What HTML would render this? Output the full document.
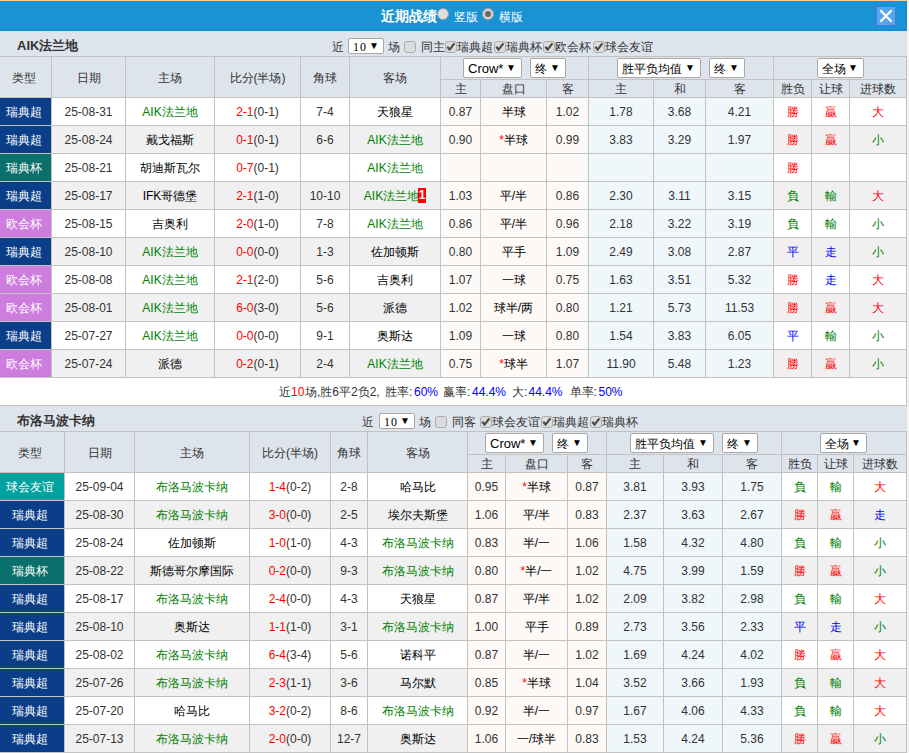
<!DOCTYPE html><html><head><meta charset="utf-8"><style>
*{margin:0;padding:0;box-sizing:content-box}
html,body{width:909px;height:753px;overflow:hidden;background:#f2f2f2}
body{position:relative;font-family:"Liberation Sans",sans-serif;font-size:12px;font-weight:500}
.c{position:absolute;text-align:center;white-space:nowrap;overflow:visible}
.t{position:absolute;white-space:nowrap;line-height:16px}
.sel{position:absolute;background:#fff;border:1px solid #a8a8a8;border-radius:2px;color:#000;font-size:12px;white-space:nowrap}
.sel .st{position:absolute;left:4px;top:1px}
.sel .ar{position:absolute;right:5px;top:0;font-size:10px}
.cb{position:absolute;width:10px;height:10px;border:1px solid #adadad;border-radius:3px;background:#dcdcdc}
.cb svg{position:absolute;left:-1px;top:-1px}
.card{display:inline-block;background:#f00;color:#fff;font-weight:bold;width:8px;height:15px;line-height:15px;text-align:center;vertical-align:middle;font-size:12px;position:relative;top:-1px;margin-left:-1px}
.radio{position:absolute;width:10px;height:10px;border-radius:50%;border:1px solid #a0a0a0;background:#dedede}
</style></head><body>
<div style="position:absolute;left:0px;top:0px;width:907px;height:1px;background:#f5cf94"></div>
<div style="position:absolute;left:0px;top:1px;width:907px;height:30px;background:#1a93d5"></div>
<div style="position:absolute;left:0px;top:30px;width:907px;height:1px;background:#0d8bd2"></div>
<div style="position:absolute;left:906px;top:1px;width:1px;height:30px;background:#0d8bd2"></div>
<div style="position:absolute;left:907px;top:0px;width:2px;height:31px;background:#fcf6f1"></div>
<div class="t" style="left:381px;top:7px;font-size:14px;font-weight:bold;color:#fff;line-height:18px">近期战绩</div>
<div class="radio" style="left:437px;top:8px"></div>
<div class="t" style="left:454px;top:9px;color:#fff">竖版</div>
<div class="radio" style="left:482px;top:8px;background:#d6d6d6"><div style="position:absolute;left:2px;top:2px;width:6px;height:6px;border-radius:50%;background:#6a6a6a"></div></div>
<div class="t" style="left:499px;top:9px;color:#fff">横版</div>
<div style="position:absolute;left:875px;top:5px;width:22px;height:22px;background:#2a86e0"></div>
<div style="position:absolute;left:877px;top:7px;width:18px;height:18px;background:#5aa6ea"></div>
<svg style="position:absolute;left:875px;top:5px" width="22" height="22" viewBox="0 0 22 22"><path d="M6 6 L16 16 M16 6 L6 16" stroke="#fff" stroke-width="2.2" stroke-linecap="round"/></svg>
<div style="position:absolute;left:0px;top:31px;width:907px;height:25px;background:#dee4ec"></div>
<div class="t" style="left:17px;top:38px;font-weight:bold;font-size:13px;color:#333;line-height:16px">AIK法兰地</div>
<div class="t" style="left:332px;top:39px;color:#333;">近</div>
<div class="sel" style="left:348px;top:38px;width:34px;height:14px;line-height:14px"><span class="st" style="font-family:'Liberation Serif',serif;font-size:12px;letter-spacing:1px;left:4px;top:1px">10</span><span class="ar" style="right:4px">&#9660;</span></div>
<div class="t" style="left:388px;top:39px;color:#333;">场</div>
<div class="cb" style="left:404px;top:41px"></div>
<div class="t" style="left:421px;top:39px;color:#333;">同主</div>
<div class="cb" style="left:445px;top:41px"><svg width="11" height="11" viewBox="0 0 11 11"><path d="M2.3 5.8 L4.6 8.6 L9.4 2.4" stroke="#484848" stroke-width="2.2" fill="none"/></svg></div>
<div class="t" style="left:457px;top:39px;color:#333;">瑞典超</div>
<div class="cb" style="left:494.2px;top:41px"><svg width="11" height="11" viewBox="0 0 11 11"><path d="M2.3 5.8 L4.6 8.6 L9.4 2.4" stroke="#484848" stroke-width="2.2" fill="none"/></svg></div>
<div class="t" style="left:506.2px;top:39px;color:#333;">瑞典杯</div>
<div class="cb" style="left:543.4px;top:41px"><svg width="11" height="11" viewBox="0 0 11 11"><path d="M2.3 5.8 L4.6 8.6 L9.4 2.4" stroke="#484848" stroke-width="2.2" fill="none"/></svg></div>
<div class="t" style="left:555.4px;top:39px;color:#333;">欧会杯</div>
<div class="cb" style="left:592.6px;top:41px"><svg width="11" height="11" viewBox="0 0 11 11"><path d="M2.3 5.8 L4.6 8.6 L9.4 2.4" stroke="#484848" stroke-width="2.2" fill="none"/></svg></div>
<div class="t" style="left:604.6px;top:39px;color:#333;">球会友谊</div>
<div style="position:absolute;left:0px;top:56px;width:907px;height:41px;background:#dee4ec"></div>
<div style="position:absolute;left:0px;top:97px;width:907px;height:28px;background:#ffffff"></div>
<div style="position:absolute;left:440px;top:97px;width:148px;height:28px;background:#fdf9f6"></div>
<div style="position:absolute;left:588px;top:97px;width:185px;height:28px;background:#f0f7fb"></div>
<div style="position:absolute;left:0px;top:97px;width:51px;height:28px;background:#0a3e89"></div>
<div style="position:absolute;left:0px;top:125px;width:907px;height:28px;background:#f0f0f0"></div>
<div style="position:absolute;left:440px;top:125px;width:148px;height:28px;background:#fdf9f6"></div>
<div style="position:absolute;left:588px;top:125px;width:185px;height:28px;background:#f0f7fb"></div>
<div style="position:absolute;left:0px;top:125px;width:51px;height:28px;background:#0a3e89"></div>
<div style="position:absolute;left:0px;top:153px;width:907px;height:28px;background:#ffffff"></div>
<div style="position:absolute;left:440px;top:153px;width:148px;height:28px;background:#fdf9f6"></div>
<div style="position:absolute;left:588px;top:153px;width:185px;height:28px;background:#f0f7fb"></div>
<div style="position:absolute;left:0px;top:153px;width:51px;height:28px;background:#0b6f6b"></div>
<div style="position:absolute;left:0px;top:181px;width:907px;height:28px;background:#f0f0f0"></div>
<div style="position:absolute;left:440px;top:181px;width:148px;height:28px;background:#fdf9f6"></div>
<div style="position:absolute;left:588px;top:181px;width:185px;height:28px;background:#f0f7fb"></div>
<div style="position:absolute;left:0px;top:181px;width:51px;height:28px;background:#0a3e89"></div>
<div style="position:absolute;left:0px;top:209px;width:907px;height:28px;background:#ffffff"></div>
<div style="position:absolute;left:440px;top:209px;width:148px;height:28px;background:#fdf9f6"></div>
<div style="position:absolute;left:588px;top:209px;width:185px;height:28px;background:#f0f7fb"></div>
<div style="position:absolute;left:0px;top:209px;width:51px;height:28px;background:#cc7ddd"></div>
<div style="position:absolute;left:0px;top:237px;width:907px;height:28px;background:#f0f0f0"></div>
<div style="position:absolute;left:440px;top:237px;width:148px;height:28px;background:#fdf9f6"></div>
<div style="position:absolute;left:588px;top:237px;width:185px;height:28px;background:#f0f7fb"></div>
<div style="position:absolute;left:0px;top:237px;width:51px;height:28px;background:#0a3e89"></div>
<div style="position:absolute;left:0px;top:265px;width:907px;height:28px;background:#ffffff"></div>
<div style="position:absolute;left:440px;top:265px;width:148px;height:28px;background:#fdf9f6"></div>
<div style="position:absolute;left:588px;top:265px;width:185px;height:28px;background:#f0f7fb"></div>
<div style="position:absolute;left:0px;top:265px;width:51px;height:28px;background:#cc7ddd"></div>
<div style="position:absolute;left:0px;top:293px;width:907px;height:28px;background:#f0f0f0"></div>
<div style="position:absolute;left:440px;top:293px;width:148px;height:28px;background:#fdf9f6"></div>
<div style="position:absolute;left:588px;top:293px;width:185px;height:28px;background:#f0f7fb"></div>
<div style="position:absolute;left:0px;top:293px;width:51px;height:28px;background:#cc7ddd"></div>
<div style="position:absolute;left:0px;top:321px;width:907px;height:28px;background:#ffffff"></div>
<div style="position:absolute;left:440px;top:321px;width:148px;height:28px;background:#fdf9f6"></div>
<div style="position:absolute;left:588px;top:321px;width:185px;height:28px;background:#f0f7fb"></div>
<div style="position:absolute;left:0px;top:321px;width:51px;height:28px;background:#0a3e89"></div>
<div style="position:absolute;left:0px;top:349px;width:907px;height:28px;background:#f0f0f0"></div>
<div style="position:absolute;left:440px;top:349px;width:148px;height:28px;background:#fdf9f6"></div>
<div style="position:absolute;left:588px;top:349px;width:185px;height:28px;background:#f0f7fb"></div>
<div style="position:absolute;left:0px;top:349px;width:51px;height:28px;background:#cc7ddd"></div>
<div style="position:absolute;left:0px;top:56px;width:907px;height:1px;background:#c2c2c2"></div>
<div style="position:absolute;left:0px;top:97px;width:907px;height:1px;background:#c2c2c2"></div>
<div style="position:absolute;left:0px;top:125px;width:907px;height:1px;background:#c2c2c2"></div>
<div style="position:absolute;left:0px;top:153px;width:907px;height:1px;background:#c2c2c2"></div>
<div style="position:absolute;left:0px;top:181px;width:907px;height:1px;background:#c2c2c2"></div>
<div style="position:absolute;left:0px;top:209px;width:907px;height:1px;background:#c2c2c2"></div>
<div style="position:absolute;left:0px;top:237px;width:907px;height:1px;background:#c2c2c2"></div>
<div style="position:absolute;left:0px;top:265px;width:907px;height:1px;background:#c2c2c2"></div>
<div style="position:absolute;left:0px;top:293px;width:907px;height:1px;background:#c2c2c2"></div>
<div style="position:absolute;left:0px;top:321px;width:907px;height:1px;background:#c2c2c2"></div>
<div style="position:absolute;left:0px;top:349px;width:907px;height:1px;background:#c2c2c2"></div>
<div style="position:absolute;left:0px;top:377px;width:907px;height:1px;background:#c2c2c2"></div>
<div style="position:absolute;left:440px;top:79px;width:467px;height:1px;background:#c2c2c2"></div>
<div style="position:absolute;left:51px;top:56px;width:1px;height:321px;background:#c2c2c2"></div>
<div style="position:absolute;left:125px;top:56px;width:1px;height:321px;background:#c2c2c2"></div>
<div style="position:absolute;left:214px;top:56px;width:1px;height:321px;background:#c2c2c2"></div>
<div style="position:absolute;left:300px;top:56px;width:1px;height:321px;background:#c2c2c2"></div>
<div style="position:absolute;left:349px;top:56px;width:1px;height:321px;background:#c2c2c2"></div>
<div style="position:absolute;left:440px;top:56px;width:1px;height:321px;background:#c2c2c2"></div>
<div style="position:absolute;left:480px;top:79px;width:1px;height:298px;background:#c2c2c2"></div>
<div style="position:absolute;left:546px;top:79px;width:1px;height:298px;background:#c2c2c2"></div>
<div style="position:absolute;left:588px;top:56px;width:1px;height:321px;background:#c2c2c2"></div>
<div style="position:absolute;left:653px;top:79px;width:1px;height:298px;background:#c2c2c2"></div>
<div style="position:absolute;left:705px;top:79px;width:1px;height:298px;background:#c2c2c2"></div>
<div style="position:absolute;left:773px;top:56px;width:1px;height:321px;background:#c2c2c2"></div>
<div style="position:absolute;left:811px;top:79px;width:1px;height:298px;background:#c2c2c2"></div>
<div style="position:absolute;left:849px;top:79px;width:1px;height:298px;background:#c2c2c2"></div>
<div style="position:absolute;left:906px;top:56px;width:1px;height:321px;background:#c2c2c2"></div>
<div class="c" style="left:-2px;top:58px;width:51px;height:40px;line-height:40px;color:#333;">类型</div>
<div class="c" style="left:52px;top:58px;width:73px;height:40px;line-height:40px;color:#333;">日期</div>
<div class="c" style="left:126px;top:58px;width:88px;height:40px;line-height:40px;color:#333;">主场</div>
<div class="c" style="left:215px;top:58px;width:85px;height:40px;line-height:40px;color:#333;">比分(半场)</div>
<div class="c" style="left:301px;top:58px;width:48px;height:40px;line-height:40px;color:#333;">角球</div>
<div class="c" style="left:350px;top:58px;width:90px;height:40px;line-height:40px;color:#333;">客场</div>
<div class="c" style="left:441px;top:81px;width:39px;height:17px;line-height:17px;color:#333;">主</div>
<div class="c" style="left:481px;top:81px;width:65px;height:17px;line-height:17px;color:#333;">盘口</div>
<div class="c" style="left:547px;top:81px;width:41px;height:17px;line-height:17px;color:#333;">客</div>
<div class="c" style="left:589px;top:81px;width:64px;height:17px;line-height:17px;color:#333;">主</div>
<div class="c" style="left:654px;top:81px;width:51px;height:17px;line-height:17px;color:#333;">和</div>
<div class="c" style="left:706px;top:81px;width:67px;height:17px;line-height:17px;color:#333;">客</div>
<div class="c" style="left:774px;top:81px;width:37px;height:17px;line-height:17px;color:#333;">胜负</div>
<div class="c" style="left:812px;top:81px;width:37px;height:17px;line-height:17px;color:#333;">让球</div>
<div class="c" style="left:850px;top:81px;width:56px;height:17px;line-height:17px;color:#333;">进球数</div>
<div class="c" style="left:-2px;top:99px;width:51px;height:27px;line-height:27px;color:#fff;">瑞典超</div>
<div class="c" style="left:52px;top:99px;width:73px;height:27px;line-height:27px;color:#333;">25-08-31</div>
<div class="c" style="left:126px;top:99px;width:88px;height:27px;line-height:27px;color:#008000;">AIK法兰地</div>
<div class="c" style="left:215px;top:99px;width:85px;height:27px;line-height:27px;color:#333;"><span style="color:#ff0000">2-1</span>(0-1)</div>
<div class="c" style="left:301px;top:99px;width:48px;height:27px;line-height:27px;color:#333;">7-4</div>
<div class="c" style="left:350px;top:99px;width:90px;height:27px;line-height:27px;color:#000;">天狼星</div>
<div class="c" style="left:441px;top:99px;width:39px;height:27px;line-height:27px;color:#333;">0.87</div>
<div class="c" style="left:481px;top:99px;width:65px;height:27px;line-height:27px;color:#000;">半球</div>
<div class="c" style="left:547px;top:99px;width:41px;height:27px;line-height:27px;color:#333;">1.02</div>
<div class="c" style="left:589px;top:99px;width:64px;height:27px;line-height:27px;color:#333;">1.78</div>
<div class="c" style="left:654px;top:99px;width:51px;height:27px;line-height:27px;color:#333;">3.68</div>
<div class="c" style="left:706px;top:99px;width:67px;height:27px;line-height:27px;color:#333;">4.21</div>
<div class="c" style="left:774px;top:99px;width:37px;height:27px;line-height:27px;color:#ff0000;">勝</div>
<div class="c" style="left:812px;top:99px;width:37px;height:27px;line-height:27px;color:#ff0000;">贏</div>
<div class="c" style="left:850px;top:99px;width:56px;height:27px;line-height:27px;color:#ff0000;">大</div>
<div class="c" style="left:-2px;top:127px;width:51px;height:27px;line-height:27px;color:#fff;">瑞典超</div>
<div class="c" style="left:52px;top:127px;width:73px;height:27px;line-height:27px;color:#333;">25-08-24</div>
<div class="c" style="left:126px;top:127px;width:88px;height:27px;line-height:27px;color:#000;">戴戈福斯</div>
<div class="c" style="left:215px;top:127px;width:85px;height:27px;line-height:27px;color:#333;"><span style="color:#ff0000">0-1</span>(0-1)</div>
<div class="c" style="left:301px;top:127px;width:48px;height:27px;line-height:27px;color:#333;">6-6</div>
<div class="c" style="left:350px;top:127px;width:90px;height:27px;line-height:27px;color:#008000;">AIK法兰地</div>
<div class="c" style="left:441px;top:127px;width:39px;height:27px;line-height:27px;color:#333;">0.90</div>
<div class="c" style="left:481px;top:127px;width:65px;height:27px;line-height:27px;color:#000;"><span style="color:#ff0000">*</span>半球</div>
<div class="c" style="left:547px;top:127px;width:41px;height:27px;line-height:27px;color:#333;">0.99</div>
<div class="c" style="left:589px;top:127px;width:64px;height:27px;line-height:27px;color:#333;">3.83</div>
<div class="c" style="left:654px;top:127px;width:51px;height:27px;line-height:27px;color:#333;">3.29</div>
<div class="c" style="left:706px;top:127px;width:67px;height:27px;line-height:27px;color:#333;">1.97</div>
<div class="c" style="left:774px;top:127px;width:37px;height:27px;line-height:27px;color:#ff0000;">勝</div>
<div class="c" style="left:812px;top:127px;width:37px;height:27px;line-height:27px;color:#ff0000;">贏</div>
<div class="c" style="left:850px;top:127px;width:56px;height:27px;line-height:27px;color:#008000;">小</div>
<div class="c" style="left:-2px;top:155px;width:51px;height:27px;line-height:27px;color:#fff;">瑞典杯</div>
<div class="c" style="left:52px;top:155px;width:73px;height:27px;line-height:27px;color:#333;">25-08-21</div>
<div class="c" style="left:126px;top:155px;width:88px;height:27px;line-height:27px;color:#000;">胡迪斯瓦尔</div>
<div class="c" style="left:215px;top:155px;width:85px;height:27px;line-height:27px;color:#333;"><span style="color:#ff0000">0-7</span>(0-1)</div>
<div class="c" style="left:301px;top:155px;width:48px;height:27px;line-height:27px;color:#333;"></div>
<div class="c" style="left:350px;top:155px;width:90px;height:27px;line-height:27px;color:#008000;">AIK法兰地</div>
<div class="c" style="left:441px;top:155px;width:39px;height:27px;line-height:27px;color:#333;"></div>
<div class="c" style="left:481px;top:155px;width:65px;height:27px;line-height:27px;color:#000;"></div>
<div class="c" style="left:547px;top:155px;width:41px;height:27px;line-height:27px;color:#333;"></div>
<div class="c" style="left:589px;top:155px;width:64px;height:27px;line-height:27px;color:#333;"></div>
<div class="c" style="left:654px;top:155px;width:51px;height:27px;line-height:27px;color:#333;"></div>
<div class="c" style="left:706px;top:155px;width:67px;height:27px;line-height:27px;color:#333;"></div>
<div class="c" style="left:774px;top:155px;width:37px;height:27px;line-height:27px;color:#ff0000;">勝</div>
<div class="c" style="left:-2px;top:183px;width:51px;height:27px;line-height:27px;color:#fff;">瑞典超</div>
<div class="c" style="left:52px;top:183px;width:73px;height:27px;line-height:27px;color:#333;">25-08-17</div>
<div class="c" style="left:126px;top:183px;width:88px;height:27px;line-height:27px;color:#000;">IFK哥德堡</div>
<div class="c" style="left:215px;top:183px;width:85px;height:27px;line-height:27px;color:#333;"><span style="color:#ff0000">2-1</span>(1-0)</div>
<div class="c" style="left:301px;top:183px;width:48px;height:27px;line-height:27px;color:#333;">10-10</div>
<div class="c" style="left:350px;top:183px;width:90px;height:27px;line-height:27px;color:#008000;">AIK法兰地<span class="card">1</span></div>
<div class="c" style="left:441px;top:183px;width:39px;height:27px;line-height:27px;color:#333;">1.03</div>
<div class="c" style="left:481px;top:183px;width:65px;height:27px;line-height:27px;color:#000;">平/半</div>
<div class="c" style="left:547px;top:183px;width:41px;height:27px;line-height:27px;color:#333;">0.86</div>
<div class="c" style="left:589px;top:183px;width:64px;height:27px;line-height:27px;color:#333;">2.30</div>
<div class="c" style="left:654px;top:183px;width:51px;height:27px;line-height:27px;color:#333;">3.11</div>
<div class="c" style="left:706px;top:183px;width:67px;height:27px;line-height:27px;color:#333;">3.15</div>
<div class="c" style="left:774px;top:183px;width:37px;height:27px;line-height:27px;color:#008000;">負</div>
<div class="c" style="left:812px;top:183px;width:37px;height:27px;line-height:27px;color:#008000;">輸</div>
<div class="c" style="left:850px;top:183px;width:56px;height:27px;line-height:27px;color:#ff0000;">大</div>
<div class="c" style="left:-2px;top:211px;width:51px;height:27px;line-height:27px;color:#fff;">欧会杯</div>
<div class="c" style="left:52px;top:211px;width:73px;height:27px;line-height:27px;color:#333;">25-08-15</div>
<div class="c" style="left:126px;top:211px;width:88px;height:27px;line-height:27px;color:#000;">吉奥利</div>
<div class="c" style="left:215px;top:211px;width:85px;height:27px;line-height:27px;color:#333;"><span style="color:#ff0000">2-0</span>(1-0)</div>
<div class="c" style="left:301px;top:211px;width:48px;height:27px;line-height:27px;color:#333;">7-8</div>
<div class="c" style="left:350px;top:211px;width:90px;height:27px;line-height:27px;color:#008000;">AIK法兰地</div>
<div class="c" style="left:441px;top:211px;width:39px;height:27px;line-height:27px;color:#333;">0.86</div>
<div class="c" style="left:481px;top:211px;width:65px;height:27px;line-height:27px;color:#000;">平/半</div>
<div class="c" style="left:547px;top:211px;width:41px;height:27px;line-height:27px;color:#333;">0.96</div>
<div class="c" style="left:589px;top:211px;width:64px;height:27px;line-height:27px;color:#333;">2.18</div>
<div class="c" style="left:654px;top:211px;width:51px;height:27px;line-height:27px;color:#333;">3.22</div>
<div class="c" style="left:706px;top:211px;width:67px;height:27px;line-height:27px;color:#333;">3.19</div>
<div class="c" style="left:774px;top:211px;width:37px;height:27px;line-height:27px;color:#008000;">負</div>
<div class="c" style="left:812px;top:211px;width:37px;height:27px;line-height:27px;color:#008000;">輸</div>
<div class="c" style="left:850px;top:211px;width:56px;height:27px;line-height:27px;color:#008000;">小</div>
<div class="c" style="left:-2px;top:239px;width:51px;height:27px;line-height:27px;color:#fff;">瑞典超</div>
<div class="c" style="left:52px;top:239px;width:73px;height:27px;line-height:27px;color:#333;">25-08-10</div>
<div class="c" style="left:126px;top:239px;width:88px;height:27px;line-height:27px;color:#008000;">AIK法兰地</div>
<div class="c" style="left:215px;top:239px;width:85px;height:27px;line-height:27px;color:#333;"><span style="color:#ff0000">0-0</span>(0-0)</div>
<div class="c" style="left:301px;top:239px;width:48px;height:27px;line-height:27px;color:#333;">1-3</div>
<div class="c" style="left:350px;top:239px;width:90px;height:27px;line-height:27px;color:#000;">佐加顿斯</div>
<div class="c" style="left:441px;top:239px;width:39px;height:27px;line-height:27px;color:#333;">0.80</div>
<div class="c" style="left:481px;top:239px;width:65px;height:27px;line-height:27px;color:#000;">平手</div>
<div class="c" style="left:547px;top:239px;width:41px;height:27px;line-height:27px;color:#333;">1.09</div>
<div class="c" style="left:589px;top:239px;width:64px;height:27px;line-height:27px;color:#333;">2.49</div>
<div class="c" style="left:654px;top:239px;width:51px;height:27px;line-height:27px;color:#333;">3.08</div>
<div class="c" style="left:706px;top:239px;width:67px;height:27px;line-height:27px;color:#333;">2.87</div>
<div class="c" style="left:774px;top:239px;width:37px;height:27px;line-height:27px;color:#0000ff;">平</div>
<div class="c" style="left:812px;top:239px;width:37px;height:27px;line-height:27px;color:#0000ff;">走</div>
<div class="c" style="left:850px;top:239px;width:56px;height:27px;line-height:27px;color:#008000;">小</div>
<div class="c" style="left:-2px;top:267px;width:51px;height:27px;line-height:27px;color:#fff;">欧会杯</div>
<div class="c" style="left:52px;top:267px;width:73px;height:27px;line-height:27px;color:#333;">25-08-08</div>
<div class="c" style="left:126px;top:267px;width:88px;height:27px;line-height:27px;color:#008000;">AIK法兰地</div>
<div class="c" style="left:215px;top:267px;width:85px;height:27px;line-height:27px;color:#333;"><span style="color:#ff0000">2-1</span>(2-0)</div>
<div class="c" style="left:301px;top:267px;width:48px;height:27px;line-height:27px;color:#333;">5-6</div>
<div class="c" style="left:350px;top:267px;width:90px;height:27px;line-height:27px;color:#000;">吉奥利</div>
<div class="c" style="left:441px;top:267px;width:39px;height:27px;line-height:27px;color:#333;">1.07</div>
<div class="c" style="left:481px;top:267px;width:65px;height:27px;line-height:27px;color:#000;">一球</div>
<div class="c" style="left:547px;top:267px;width:41px;height:27px;line-height:27px;color:#333;">0.75</div>
<div class="c" style="left:589px;top:267px;width:64px;height:27px;line-height:27px;color:#333;">1.63</div>
<div class="c" style="left:654px;top:267px;width:51px;height:27px;line-height:27px;color:#333;">3.51</div>
<div class="c" style="left:706px;top:267px;width:67px;height:27px;line-height:27px;color:#333;">5.32</div>
<div class="c" style="left:774px;top:267px;width:37px;height:27px;line-height:27px;color:#ff0000;">勝</div>
<div class="c" style="left:812px;top:267px;width:37px;height:27px;line-height:27px;color:#0000ff;">走</div>
<div class="c" style="left:850px;top:267px;width:56px;height:27px;line-height:27px;color:#ff0000;">大</div>
<div class="c" style="left:-2px;top:295px;width:51px;height:27px;line-height:27px;color:#fff;">欧会杯</div>
<div class="c" style="left:52px;top:295px;width:73px;height:27px;line-height:27px;color:#333;">25-08-01</div>
<div class="c" style="left:126px;top:295px;width:88px;height:27px;line-height:27px;color:#008000;">AIK法兰地</div>
<div class="c" style="left:215px;top:295px;width:85px;height:27px;line-height:27px;color:#333;"><span style="color:#ff0000">6-0</span>(3-0)</div>
<div class="c" style="left:301px;top:295px;width:48px;height:27px;line-height:27px;color:#333;">5-6</div>
<div class="c" style="left:350px;top:295px;width:90px;height:27px;line-height:27px;color:#000;">派德</div>
<div class="c" style="left:441px;top:295px;width:39px;height:27px;line-height:27px;color:#333;">1.02</div>
<div class="c" style="left:481px;top:295px;width:65px;height:27px;line-height:27px;color:#000;">球半/两</div>
<div class="c" style="left:547px;top:295px;width:41px;height:27px;line-height:27px;color:#333;">0.80</div>
<div class="c" style="left:589px;top:295px;width:64px;height:27px;line-height:27px;color:#333;">1.21</div>
<div class="c" style="left:654px;top:295px;width:51px;height:27px;line-height:27px;color:#333;">5.73</div>
<div class="c" style="left:706px;top:295px;width:67px;height:27px;line-height:27px;color:#333;">11.53</div>
<div class="c" style="left:774px;top:295px;width:37px;height:27px;line-height:27px;color:#ff0000;">勝</div>
<div class="c" style="left:812px;top:295px;width:37px;height:27px;line-height:27px;color:#ff0000;">贏</div>
<div class="c" style="left:850px;top:295px;width:56px;height:27px;line-height:27px;color:#ff0000;">大</div>
<div class="c" style="left:-2px;top:323px;width:51px;height:27px;line-height:27px;color:#fff;">瑞典超</div>
<div class="c" style="left:52px;top:323px;width:73px;height:27px;line-height:27px;color:#333;">25-07-27</div>
<div class="c" style="left:126px;top:323px;width:88px;height:27px;line-height:27px;color:#008000;">AIK法兰地</div>
<div class="c" style="left:215px;top:323px;width:85px;height:27px;line-height:27px;color:#333;"><span style="color:#ff0000">0-0</span>(0-0)</div>
<div class="c" style="left:301px;top:323px;width:48px;height:27px;line-height:27px;color:#333;">9-1</div>
<div class="c" style="left:350px;top:323px;width:90px;height:27px;line-height:27px;color:#000;">奥斯达</div>
<div class="c" style="left:441px;top:323px;width:39px;height:27px;line-height:27px;color:#333;">1.09</div>
<div class="c" style="left:481px;top:323px;width:65px;height:27px;line-height:27px;color:#000;">一球</div>
<div class="c" style="left:547px;top:323px;width:41px;height:27px;line-height:27px;color:#333;">0.80</div>
<div class="c" style="left:589px;top:323px;width:64px;height:27px;line-height:27px;color:#333;">1.54</div>
<div class="c" style="left:654px;top:323px;width:51px;height:27px;line-height:27px;color:#333;">3.83</div>
<div class="c" style="left:706px;top:323px;width:67px;height:27px;line-height:27px;color:#333;">6.05</div>
<div class="c" style="left:774px;top:323px;width:37px;height:27px;line-height:27px;color:#0000ff;">平</div>
<div class="c" style="left:812px;top:323px;width:37px;height:27px;line-height:27px;color:#008000;">輸</div>
<div class="c" style="left:850px;top:323px;width:56px;height:27px;line-height:27px;color:#008000;">小</div>
<div class="c" style="left:-2px;top:351px;width:51px;height:27px;line-height:27px;color:#fff;">欧会杯</div>
<div class="c" style="left:52px;top:351px;width:73px;height:27px;line-height:27px;color:#333;">25-07-24</div>
<div class="c" style="left:126px;top:351px;width:88px;height:27px;line-height:27px;color:#000;">派德</div>
<div class="c" style="left:215px;top:351px;width:85px;height:27px;line-height:27px;color:#333;"><span style="color:#ff0000">0-2</span>(0-1)</div>
<div class="c" style="left:301px;top:351px;width:48px;height:27px;line-height:27px;color:#333;">2-4</div>
<div class="c" style="left:350px;top:351px;width:90px;height:27px;line-height:27px;color:#008000;">AIK法兰地</div>
<div class="c" style="left:441px;top:351px;width:39px;height:27px;line-height:27px;color:#333;">0.75</div>
<div class="c" style="left:481px;top:351px;width:65px;height:27px;line-height:27px;color:#000;"><span style="color:#ff0000">*</span>球半</div>
<div class="c" style="left:547px;top:351px;width:41px;height:27px;line-height:27px;color:#333;">1.07</div>
<div class="c" style="left:589px;top:351px;width:64px;height:27px;line-height:27px;color:#333;">11.90</div>
<div class="c" style="left:654px;top:351px;width:51px;height:27px;line-height:27px;color:#333;">5.48</div>
<div class="c" style="left:706px;top:351px;width:67px;height:27px;line-height:27px;color:#333;">1.23</div>
<div class="c" style="left:774px;top:351px;width:37px;height:27px;line-height:27px;color:#ff0000;">勝</div>
<div class="c" style="left:812px;top:351px;width:37px;height:27px;line-height:27px;color:#ff0000;">贏</div>
<div class="c" style="left:850px;top:351px;width:56px;height:27px;line-height:27px;color:#008000;">小</div>
<div class="sel" style="left:463px;top:58px;width:57px;height:18px;line-height:18px"><span class="st"><span style="font-size:13px">Crow*</span></span><span class="ar">&#9660;</span></div>
<div class="sel" style="left:530px;top:58px;width:34px;height:18px;line-height:18px"><span class="st">终</span><span class="ar">&#9660;</span></div>
<div class="sel" style="left:617px;top:58px;width:82px;height:18px;line-height:18px"><span class="st">胜平负均值</span><span class="ar">&#9660;</span></div>
<div class="sel" style="left:709px;top:58px;width:34px;height:18px;line-height:18px"><span class="st">终</span><span class="ar">&#9660;</span></div>
<div class="sel" style="left:817px;top:58px;width:45px;height:18px;line-height:18px"><span class="st">全场</span><span class="ar">&#9660;</span></div>
<div style="position:absolute;left:0px;top:378px;width:907px;height:27px;background:#fff"></div>
<div style="position:absolute;left:906px;top:377px;width:1px;height:28px;background:#c2c2c2"></div>
<div style="position:absolute;left:0px;top:405px;width:907px;height:1px;background:#c2c2c2"></div>
<div class="t" style="left:279px;top:384px;color:#333;">近</div>
<div class="t" style="left:291px;top:384px;color:#f00;">10</div>
<div class="t" style="left:305px;top:384px;color:#333;">场,胜6平2负2,</div>
<div class="t" style="left:385px;top:384px;color:#333;">胜率:</div>
<div class="t" style="left:414px;top:384px;color:#00f;">60%</div>
<div class="t" style="left:443px;top:384px;color:#333;">赢率:</div>
<div class="t" style="left:472px;top:384px;color:#00f;">44.4%</div>
<div class="t" style="left:512px;top:384px;color:#333;">大:</div>
<div class="t" style="left:528.5px;top:384px;color:#00f;">44.4%</div>
<div class="t" style="left:569.5px;top:384px;color:#333;">单率:</div>
<div class="t" style="left:598.5px;top:384px;color:#00f;">50%</div>
<div style="position:absolute;left:0px;top:406px;width:907px;height:25px;background:#dee4ec"></div>
<div class="t" style="left:17px;top:413px;font-weight:bold;font-size:13px;color:#333;line-height:16px">布洛马波卡纳</div>
<div class="t" style="left:362px;top:414px;color:#333;">近</div>
<div class="sel" style="left:379px;top:413px;width:34px;height:14px;line-height:14px"><span class="st" style="font-family:'Liberation Serif',serif;font-size:12px;letter-spacing:1px;left:4px;top:1px">10</span><span class="ar" style="right:4px">&#9660;</span></div>
<div class="t" style="left:419px;top:414px;color:#333;">场</div>
<div class="cb" style="left:435px;top:416px"></div>
<div class="t" style="left:452px;top:414px;color:#333;">同客</div>
<div class="cb" style="left:480px;top:416px"><svg width="11" height="11" viewBox="0 0 11 11"><path d="M2.3 5.8 L4.6 8.6 L9.4 2.4" stroke="#484848" stroke-width="2.2" fill="none"/></svg></div>
<div class="t" style="left:492px;top:414px;color:#333;">球会友谊</div>
<div class="cb" style="left:541.2px;top:416px"><svg width="11" height="11" viewBox="0 0 11 11"><path d="M2.3 5.8 L4.6 8.6 L9.4 2.4" stroke="#484848" stroke-width="2.2" fill="none"/></svg></div>
<div class="t" style="left:553.2px;top:414px;color:#333;">瑞典超</div>
<div class="cb" style="left:590.4000000000001px;top:416px"><svg width="11" height="11" viewBox="0 0 11 11"><path d="M2.3 5.8 L4.6 8.6 L9.4 2.4" stroke="#484848" stroke-width="2.2" fill="none"/></svg></div>
<div class="t" style="left:602.4000000000001px;top:414px;color:#333;">瑞典杯</div>
<div style="position:absolute;left:0px;top:431px;width:907px;height:41px;background:#dee4ec"></div>
<div style="position:absolute;left:0px;top:472px;width:907px;height:28px;background:#ffffff"></div>
<div style="position:absolute;left:467px;top:472px;width:139px;height:28px;background:#fdf9f6"></div>
<div style="position:absolute;left:606px;top:472px;width:175px;height:28px;background:#f0f7fb"></div>
<div style="position:absolute;left:0px;top:472px;width:64px;height:28px;background:#00a29d"></div>
<div style="position:absolute;left:0px;top:500px;width:907px;height:28px;background:#f0f0f0"></div>
<div style="position:absolute;left:467px;top:500px;width:139px;height:28px;background:#fdf9f6"></div>
<div style="position:absolute;left:606px;top:500px;width:175px;height:28px;background:#f0f7fb"></div>
<div style="position:absolute;left:0px;top:500px;width:64px;height:28px;background:#0a3e89"></div>
<div style="position:absolute;left:0px;top:528px;width:907px;height:28px;background:#ffffff"></div>
<div style="position:absolute;left:467px;top:528px;width:139px;height:28px;background:#fdf9f6"></div>
<div style="position:absolute;left:606px;top:528px;width:175px;height:28px;background:#f0f7fb"></div>
<div style="position:absolute;left:0px;top:528px;width:64px;height:28px;background:#0a3e89"></div>
<div style="position:absolute;left:0px;top:556px;width:907px;height:28px;background:#f0f0f0"></div>
<div style="position:absolute;left:467px;top:556px;width:139px;height:28px;background:#fdf9f6"></div>
<div style="position:absolute;left:606px;top:556px;width:175px;height:28px;background:#f0f7fb"></div>
<div style="position:absolute;left:0px;top:556px;width:64px;height:28px;background:#0b6f6b"></div>
<div style="position:absolute;left:0px;top:584px;width:907px;height:28px;background:#ffffff"></div>
<div style="position:absolute;left:467px;top:584px;width:139px;height:28px;background:#fdf9f6"></div>
<div style="position:absolute;left:606px;top:584px;width:175px;height:28px;background:#f0f7fb"></div>
<div style="position:absolute;left:0px;top:584px;width:64px;height:28px;background:#0a3e89"></div>
<div style="position:absolute;left:0px;top:612px;width:907px;height:28px;background:#f0f0f0"></div>
<div style="position:absolute;left:467px;top:612px;width:139px;height:28px;background:#fdf9f6"></div>
<div style="position:absolute;left:606px;top:612px;width:175px;height:28px;background:#f0f7fb"></div>
<div style="position:absolute;left:0px;top:612px;width:64px;height:28px;background:#0a3e89"></div>
<div style="position:absolute;left:0px;top:640px;width:907px;height:28px;background:#ffffff"></div>
<div style="position:absolute;left:467px;top:640px;width:139px;height:28px;background:#fdf9f6"></div>
<div style="position:absolute;left:606px;top:640px;width:175px;height:28px;background:#f0f7fb"></div>
<div style="position:absolute;left:0px;top:640px;width:64px;height:28px;background:#0a3e89"></div>
<div style="position:absolute;left:0px;top:668px;width:907px;height:28px;background:#f0f0f0"></div>
<div style="position:absolute;left:467px;top:668px;width:139px;height:28px;background:#fdf9f6"></div>
<div style="position:absolute;left:606px;top:668px;width:175px;height:28px;background:#f0f7fb"></div>
<div style="position:absolute;left:0px;top:668px;width:64px;height:28px;background:#0a3e89"></div>
<div style="position:absolute;left:0px;top:696px;width:907px;height:28px;background:#ffffff"></div>
<div style="position:absolute;left:467px;top:696px;width:139px;height:28px;background:#fdf9f6"></div>
<div style="position:absolute;left:606px;top:696px;width:175px;height:28px;background:#f0f7fb"></div>
<div style="position:absolute;left:0px;top:696px;width:64px;height:28px;background:#0a3e89"></div>
<div style="position:absolute;left:0px;top:724px;width:907px;height:28px;background:#f0f0f0"></div>
<div style="position:absolute;left:467px;top:724px;width:139px;height:28px;background:#fdf9f6"></div>
<div style="position:absolute;left:606px;top:724px;width:175px;height:28px;background:#f0f7fb"></div>
<div style="position:absolute;left:0px;top:724px;width:64px;height:28px;background:#0a3e89"></div>
<div style="position:absolute;left:0px;top:431px;width:907px;height:1px;background:#c2c2c2"></div>
<div style="position:absolute;left:0px;top:472px;width:907px;height:1px;background:#c2c2c2"></div>
<div style="position:absolute;left:0px;top:500px;width:907px;height:1px;background:#c2c2c2"></div>
<div style="position:absolute;left:0px;top:528px;width:907px;height:1px;background:#c2c2c2"></div>
<div style="position:absolute;left:0px;top:556px;width:907px;height:1px;background:#c2c2c2"></div>
<div style="position:absolute;left:0px;top:584px;width:907px;height:1px;background:#c2c2c2"></div>
<div style="position:absolute;left:0px;top:612px;width:907px;height:1px;background:#c2c2c2"></div>
<div style="position:absolute;left:0px;top:640px;width:907px;height:1px;background:#c2c2c2"></div>
<div style="position:absolute;left:0px;top:668px;width:907px;height:1px;background:#c2c2c2"></div>
<div style="position:absolute;left:0px;top:696px;width:907px;height:1px;background:#c2c2c2"></div>
<div style="position:absolute;left:0px;top:724px;width:907px;height:1px;background:#c2c2c2"></div>
<div style="position:absolute;left:0px;top:752px;width:907px;height:1px;background:#c2c2c2"></div>
<div style="position:absolute;left:467px;top:454px;width:440px;height:1px;background:#c2c2c2"></div>
<div style="position:absolute;left:64px;top:431px;width:1px;height:321px;background:#c2c2c2"></div>
<div style="position:absolute;left:134px;top:431px;width:1px;height:321px;background:#c2c2c2"></div>
<div style="position:absolute;left:249px;top:431px;width:1px;height:321px;background:#c2c2c2"></div>
<div style="position:absolute;left:330px;top:431px;width:1px;height:321px;background:#c2c2c2"></div>
<div style="position:absolute;left:367px;top:431px;width:1px;height:321px;background:#c2c2c2"></div>
<div style="position:absolute;left:467px;top:431px;width:1px;height:321px;background:#c2c2c2"></div>
<div style="position:absolute;left:505px;top:454px;width:1px;height:298px;background:#c2c2c2"></div>
<div style="position:absolute;left:567px;top:454px;width:1px;height:298px;background:#c2c2c2"></div>
<div style="position:absolute;left:606px;top:431px;width:1px;height:321px;background:#c2c2c2"></div>
<div style="position:absolute;left:663px;top:454px;width:1px;height:298px;background:#c2c2c2"></div>
<div style="position:absolute;left:722px;top:454px;width:1px;height:298px;background:#c2c2c2"></div>
<div style="position:absolute;left:781px;top:431px;width:1px;height:321px;background:#c2c2c2"></div>
<div style="position:absolute;left:817px;top:454px;width:1px;height:298px;background:#c2c2c2"></div>
<div style="position:absolute;left:853px;top:454px;width:1px;height:298px;background:#c2c2c2"></div>
<div style="position:absolute;left:906px;top:431px;width:1px;height:321px;background:#c2c2c2"></div>
<div class="c" style="left:-2px;top:433px;width:64px;height:40px;line-height:40px;color:#333;">类型</div>
<div class="c" style="left:65px;top:433px;width:69px;height:40px;line-height:40px;color:#333;">日期</div>
<div class="c" style="left:135px;top:433px;width:114px;height:40px;line-height:40px;color:#333;">主场</div>
<div class="c" style="left:250px;top:433px;width:80px;height:40px;line-height:40px;color:#333;">比分(半场)</div>
<div class="c" style="left:331px;top:433px;width:36px;height:40px;line-height:40px;color:#333;">角球</div>
<div class="c" style="left:368px;top:433px;width:99px;height:40px;line-height:40px;color:#333;">客场</div>
<div class="c" style="left:468px;top:456px;width:37px;height:17px;line-height:17px;color:#333;">主</div>
<div class="c" style="left:506px;top:456px;width:61px;height:17px;line-height:17px;color:#333;">盘口</div>
<div class="c" style="left:568px;top:456px;width:38px;height:17px;line-height:17px;color:#333;">客</div>
<div class="c" style="left:607px;top:456px;width:56px;height:17px;line-height:17px;color:#333;">主</div>
<div class="c" style="left:664px;top:456px;width:58px;height:17px;line-height:17px;color:#333;">和</div>
<div class="c" style="left:723px;top:456px;width:58px;height:17px;line-height:17px;color:#333;">客</div>
<div class="c" style="left:782px;top:456px;width:35px;height:17px;line-height:17px;color:#333;">胜负</div>
<div class="c" style="left:818px;top:456px;width:35px;height:17px;line-height:17px;color:#333;">让球</div>
<div class="c" style="left:854px;top:456px;width:52px;height:17px;line-height:17px;color:#333;">进球数</div>
<div class="c" style="left:-2px;top:474px;width:64px;height:27px;line-height:27px;color:#fff;">球会友谊</div>
<div class="c" style="left:65px;top:474px;width:69px;height:27px;line-height:27px;color:#333;">25-09-04</div>
<div class="c" style="left:135px;top:474px;width:114px;height:27px;line-height:27px;color:#008000;">布洛马波卡纳</div>
<div class="c" style="left:250px;top:474px;width:80px;height:27px;line-height:27px;color:#333;"><span style="color:#ff0000">1-4</span>(0-2)</div>
<div class="c" style="left:331px;top:474px;width:36px;height:27px;line-height:27px;color:#333;">2-8</div>
<div class="c" style="left:368px;top:474px;width:99px;height:27px;line-height:27px;color:#000;">哈马比</div>
<div class="c" style="left:468px;top:474px;width:37px;height:27px;line-height:27px;color:#333;">0.95</div>
<div class="c" style="left:506px;top:474px;width:61px;height:27px;line-height:27px;color:#000;"><span style="color:#ff0000">*</span>半球</div>
<div class="c" style="left:568px;top:474px;width:38px;height:27px;line-height:27px;color:#333;">0.87</div>
<div class="c" style="left:607px;top:474px;width:56px;height:27px;line-height:27px;color:#333;">3.81</div>
<div class="c" style="left:664px;top:474px;width:58px;height:27px;line-height:27px;color:#333;">3.93</div>
<div class="c" style="left:723px;top:474px;width:58px;height:27px;line-height:27px;color:#333;">1.75</div>
<div class="c" style="left:782px;top:474px;width:35px;height:27px;line-height:27px;color:#008000;">負</div>
<div class="c" style="left:818px;top:474px;width:35px;height:27px;line-height:27px;color:#008000;">輸</div>
<div class="c" style="left:854px;top:474px;width:52px;height:27px;line-height:27px;color:#ff0000;">大</div>
<div class="c" style="left:-2px;top:502px;width:64px;height:27px;line-height:27px;color:#fff;">瑞典超</div>
<div class="c" style="left:65px;top:502px;width:69px;height:27px;line-height:27px;color:#333;">25-08-30</div>
<div class="c" style="left:135px;top:502px;width:114px;height:27px;line-height:27px;color:#008000;">布洛马波卡纳</div>
<div class="c" style="left:250px;top:502px;width:80px;height:27px;line-height:27px;color:#333;"><span style="color:#ff0000">3-0</span>(0-0)</div>
<div class="c" style="left:331px;top:502px;width:36px;height:27px;line-height:27px;color:#333;">2-5</div>
<div class="c" style="left:368px;top:502px;width:99px;height:27px;line-height:27px;color:#000;">埃尔夫斯堡</div>
<div class="c" style="left:468px;top:502px;width:37px;height:27px;line-height:27px;color:#333;">1.06</div>
<div class="c" style="left:506px;top:502px;width:61px;height:27px;line-height:27px;color:#000;">平/半</div>
<div class="c" style="left:568px;top:502px;width:38px;height:27px;line-height:27px;color:#333;">0.83</div>
<div class="c" style="left:607px;top:502px;width:56px;height:27px;line-height:27px;color:#333;">2.37</div>
<div class="c" style="left:664px;top:502px;width:58px;height:27px;line-height:27px;color:#333;">3.63</div>
<div class="c" style="left:723px;top:502px;width:58px;height:27px;line-height:27px;color:#333;">2.67</div>
<div class="c" style="left:782px;top:502px;width:35px;height:27px;line-height:27px;color:#ff0000;">勝</div>
<div class="c" style="left:818px;top:502px;width:35px;height:27px;line-height:27px;color:#ff0000;">贏</div>
<div class="c" style="left:854px;top:502px;width:52px;height:27px;line-height:27px;color:#0000ff;">走</div>
<div class="c" style="left:-2px;top:530px;width:64px;height:27px;line-height:27px;color:#fff;">瑞典超</div>
<div class="c" style="left:65px;top:530px;width:69px;height:27px;line-height:27px;color:#333;">25-08-24</div>
<div class="c" style="left:135px;top:530px;width:114px;height:27px;line-height:27px;color:#000;">佐加顿斯</div>
<div class="c" style="left:250px;top:530px;width:80px;height:27px;line-height:27px;color:#333;"><span style="color:#ff0000">1-0</span>(1-0)</div>
<div class="c" style="left:331px;top:530px;width:36px;height:27px;line-height:27px;color:#333;">4-3</div>
<div class="c" style="left:368px;top:530px;width:99px;height:27px;line-height:27px;color:#008000;">布洛马波卡纳</div>
<div class="c" style="left:468px;top:530px;width:37px;height:27px;line-height:27px;color:#333;">0.83</div>
<div class="c" style="left:506px;top:530px;width:61px;height:27px;line-height:27px;color:#000;">半/一</div>
<div class="c" style="left:568px;top:530px;width:38px;height:27px;line-height:27px;color:#333;">1.06</div>
<div class="c" style="left:607px;top:530px;width:56px;height:27px;line-height:27px;color:#333;">1.58</div>
<div class="c" style="left:664px;top:530px;width:58px;height:27px;line-height:27px;color:#333;">4.32</div>
<div class="c" style="left:723px;top:530px;width:58px;height:27px;line-height:27px;color:#333;">4.80</div>
<div class="c" style="left:782px;top:530px;width:35px;height:27px;line-height:27px;color:#008000;">負</div>
<div class="c" style="left:818px;top:530px;width:35px;height:27px;line-height:27px;color:#008000;">輸</div>
<div class="c" style="left:854px;top:530px;width:52px;height:27px;line-height:27px;color:#008000;">小</div>
<div class="c" style="left:-2px;top:558px;width:64px;height:27px;line-height:27px;color:#fff;">瑞典杯</div>
<div class="c" style="left:65px;top:558px;width:69px;height:27px;line-height:27px;color:#333;">25-08-22</div>
<div class="c" style="left:135px;top:558px;width:114px;height:27px;line-height:27px;color:#000;">斯德哥尔摩国际</div>
<div class="c" style="left:250px;top:558px;width:80px;height:27px;line-height:27px;color:#333;"><span style="color:#ff0000">0-2</span>(0-0)</div>
<div class="c" style="left:331px;top:558px;width:36px;height:27px;line-height:27px;color:#333;">9-3</div>
<div class="c" style="left:368px;top:558px;width:99px;height:27px;line-height:27px;color:#008000;">布洛马波卡纳</div>
<div class="c" style="left:468px;top:558px;width:37px;height:27px;line-height:27px;color:#333;">0.80</div>
<div class="c" style="left:506px;top:558px;width:61px;height:27px;line-height:27px;color:#000;"><span style="color:#ff0000">*</span>半/一</div>
<div class="c" style="left:568px;top:558px;width:38px;height:27px;line-height:27px;color:#333;">1.02</div>
<div class="c" style="left:607px;top:558px;width:56px;height:27px;line-height:27px;color:#333;">4.75</div>
<div class="c" style="left:664px;top:558px;width:58px;height:27px;line-height:27px;color:#333;">3.99</div>
<div class="c" style="left:723px;top:558px;width:58px;height:27px;line-height:27px;color:#333;">1.59</div>
<div class="c" style="left:782px;top:558px;width:35px;height:27px;line-height:27px;color:#ff0000;">勝</div>
<div class="c" style="left:818px;top:558px;width:35px;height:27px;line-height:27px;color:#ff0000;">贏</div>
<div class="c" style="left:854px;top:558px;width:52px;height:27px;line-height:27px;color:#008000;">小</div>
<div class="c" style="left:-2px;top:586px;width:64px;height:27px;line-height:27px;color:#fff;">瑞典超</div>
<div class="c" style="left:65px;top:586px;width:69px;height:27px;line-height:27px;color:#333;">25-08-17</div>
<div class="c" style="left:135px;top:586px;width:114px;height:27px;line-height:27px;color:#008000;">布洛马波卡纳</div>
<div class="c" style="left:250px;top:586px;width:80px;height:27px;line-height:27px;color:#333;"><span style="color:#ff0000">2-4</span>(0-0)</div>
<div class="c" style="left:331px;top:586px;width:36px;height:27px;line-height:27px;color:#333;">4-3</div>
<div class="c" style="left:368px;top:586px;width:99px;height:27px;line-height:27px;color:#000;">天狼星</div>
<div class="c" style="left:468px;top:586px;width:37px;height:27px;line-height:27px;color:#333;">0.87</div>
<div class="c" style="left:506px;top:586px;width:61px;height:27px;line-height:27px;color:#000;">平/半</div>
<div class="c" style="left:568px;top:586px;width:38px;height:27px;line-height:27px;color:#333;">1.02</div>
<div class="c" style="left:607px;top:586px;width:56px;height:27px;line-height:27px;color:#333;">2.09</div>
<div class="c" style="left:664px;top:586px;width:58px;height:27px;line-height:27px;color:#333;">3.82</div>
<div class="c" style="left:723px;top:586px;width:58px;height:27px;line-height:27px;color:#333;">2.98</div>
<div class="c" style="left:782px;top:586px;width:35px;height:27px;line-height:27px;color:#008000;">負</div>
<div class="c" style="left:818px;top:586px;width:35px;height:27px;line-height:27px;color:#008000;">輸</div>
<div class="c" style="left:854px;top:586px;width:52px;height:27px;line-height:27px;color:#ff0000;">大</div>
<div class="c" style="left:-2px;top:614px;width:64px;height:27px;line-height:27px;color:#fff;">瑞典超</div>
<div class="c" style="left:65px;top:614px;width:69px;height:27px;line-height:27px;color:#333;">25-08-10</div>
<div class="c" style="left:135px;top:614px;width:114px;height:27px;line-height:27px;color:#000;">奥斯达</div>
<div class="c" style="left:250px;top:614px;width:80px;height:27px;line-height:27px;color:#333;"><span style="color:#ff0000">1-1</span>(1-0)</div>
<div class="c" style="left:331px;top:614px;width:36px;height:27px;line-height:27px;color:#333;">3-1</div>
<div class="c" style="left:368px;top:614px;width:99px;height:27px;line-height:27px;color:#008000;">布洛马波卡纳</div>
<div class="c" style="left:468px;top:614px;width:37px;height:27px;line-height:27px;color:#333;">1.00</div>
<div class="c" style="left:506px;top:614px;width:61px;height:27px;line-height:27px;color:#000;">平手</div>
<div class="c" style="left:568px;top:614px;width:38px;height:27px;line-height:27px;color:#333;">0.89</div>
<div class="c" style="left:607px;top:614px;width:56px;height:27px;line-height:27px;color:#333;">2.73</div>
<div class="c" style="left:664px;top:614px;width:58px;height:27px;line-height:27px;color:#333;">3.56</div>
<div class="c" style="left:723px;top:614px;width:58px;height:27px;line-height:27px;color:#333;">2.33</div>
<div class="c" style="left:782px;top:614px;width:35px;height:27px;line-height:27px;color:#0000ff;">平</div>
<div class="c" style="left:818px;top:614px;width:35px;height:27px;line-height:27px;color:#0000ff;">走</div>
<div class="c" style="left:854px;top:614px;width:52px;height:27px;line-height:27px;color:#008000;">小</div>
<div class="c" style="left:-2px;top:642px;width:64px;height:27px;line-height:27px;color:#fff;">瑞典超</div>
<div class="c" style="left:65px;top:642px;width:69px;height:27px;line-height:27px;color:#333;">25-08-02</div>
<div class="c" style="left:135px;top:642px;width:114px;height:27px;line-height:27px;color:#008000;">布洛马波卡纳</div>
<div class="c" style="left:250px;top:642px;width:80px;height:27px;line-height:27px;color:#333;"><span style="color:#ff0000">6-4</span>(3-4)</div>
<div class="c" style="left:331px;top:642px;width:36px;height:27px;line-height:27px;color:#333;">5-6</div>
<div class="c" style="left:368px;top:642px;width:99px;height:27px;line-height:27px;color:#000;">诺科平</div>
<div class="c" style="left:468px;top:642px;width:37px;height:27px;line-height:27px;color:#333;">0.87</div>
<div class="c" style="left:506px;top:642px;width:61px;height:27px;line-height:27px;color:#000;">半/一</div>
<div class="c" style="left:568px;top:642px;width:38px;height:27px;line-height:27px;color:#333;">1.02</div>
<div class="c" style="left:607px;top:642px;width:56px;height:27px;line-height:27px;color:#333;">1.69</div>
<div class="c" style="left:664px;top:642px;width:58px;height:27px;line-height:27px;color:#333;">4.24</div>
<div class="c" style="left:723px;top:642px;width:58px;height:27px;line-height:27px;color:#333;">4.02</div>
<div class="c" style="left:782px;top:642px;width:35px;height:27px;line-height:27px;color:#ff0000;">勝</div>
<div class="c" style="left:818px;top:642px;width:35px;height:27px;line-height:27px;color:#ff0000;">贏</div>
<div class="c" style="left:854px;top:642px;width:52px;height:27px;line-height:27px;color:#ff0000;">大</div>
<div class="c" style="left:-2px;top:670px;width:64px;height:27px;line-height:27px;color:#fff;">瑞典超</div>
<div class="c" style="left:65px;top:670px;width:69px;height:27px;line-height:27px;color:#333;">25-07-26</div>
<div class="c" style="left:135px;top:670px;width:114px;height:27px;line-height:27px;color:#008000;">布洛马波卡纳</div>
<div class="c" style="left:250px;top:670px;width:80px;height:27px;line-height:27px;color:#333;"><span style="color:#ff0000">2-3</span>(1-1)</div>
<div class="c" style="left:331px;top:670px;width:36px;height:27px;line-height:27px;color:#333;">3-6</div>
<div class="c" style="left:368px;top:670px;width:99px;height:27px;line-height:27px;color:#000;">马尔默</div>
<div class="c" style="left:468px;top:670px;width:37px;height:27px;line-height:27px;color:#333;">0.85</div>
<div class="c" style="left:506px;top:670px;width:61px;height:27px;line-height:27px;color:#000;"><span style="color:#ff0000">*</span>半球</div>
<div class="c" style="left:568px;top:670px;width:38px;height:27px;line-height:27px;color:#333;">1.04</div>
<div class="c" style="left:607px;top:670px;width:56px;height:27px;line-height:27px;color:#333;">3.52</div>
<div class="c" style="left:664px;top:670px;width:58px;height:27px;line-height:27px;color:#333;">3.66</div>
<div class="c" style="left:723px;top:670px;width:58px;height:27px;line-height:27px;color:#333;">1.93</div>
<div class="c" style="left:782px;top:670px;width:35px;height:27px;line-height:27px;color:#008000;">負</div>
<div class="c" style="left:818px;top:670px;width:35px;height:27px;line-height:27px;color:#008000;">輸</div>
<div class="c" style="left:854px;top:670px;width:52px;height:27px;line-height:27px;color:#ff0000;">大</div>
<div class="c" style="left:-2px;top:698px;width:64px;height:27px;line-height:27px;color:#fff;">瑞典超</div>
<div class="c" style="left:65px;top:698px;width:69px;height:27px;line-height:27px;color:#333;">25-07-20</div>
<div class="c" style="left:135px;top:698px;width:114px;height:27px;line-height:27px;color:#000;">哈马比</div>
<div class="c" style="left:250px;top:698px;width:80px;height:27px;line-height:27px;color:#333;"><span style="color:#ff0000">3-2</span>(0-2)</div>
<div class="c" style="left:331px;top:698px;width:36px;height:27px;line-height:27px;color:#333;">8-6</div>
<div class="c" style="left:368px;top:698px;width:99px;height:27px;line-height:27px;color:#008000;">布洛马波卡纳</div>
<div class="c" style="left:468px;top:698px;width:37px;height:27px;line-height:27px;color:#333;">0.92</div>
<div class="c" style="left:506px;top:698px;width:61px;height:27px;line-height:27px;color:#000;">半/一</div>
<div class="c" style="left:568px;top:698px;width:38px;height:27px;line-height:27px;color:#333;">0.97</div>
<div class="c" style="left:607px;top:698px;width:56px;height:27px;line-height:27px;color:#333;">1.67</div>
<div class="c" style="left:664px;top:698px;width:58px;height:27px;line-height:27px;color:#333;">4.06</div>
<div class="c" style="left:723px;top:698px;width:58px;height:27px;line-height:27px;color:#333;">4.33</div>
<div class="c" style="left:782px;top:698px;width:35px;height:27px;line-height:27px;color:#008000;">負</div>
<div class="c" style="left:818px;top:698px;width:35px;height:27px;line-height:27px;color:#008000;">輸</div>
<div class="c" style="left:854px;top:698px;width:52px;height:27px;line-height:27px;color:#ff0000;">大</div>
<div class="c" style="left:-2px;top:726px;width:64px;height:27px;line-height:27px;color:#fff;">瑞典超</div>
<div class="c" style="left:65px;top:726px;width:69px;height:27px;line-height:27px;color:#333;">25-07-13</div>
<div class="c" style="left:135px;top:726px;width:114px;height:27px;line-height:27px;color:#008000;">布洛马波卡纳</div>
<div class="c" style="left:250px;top:726px;width:80px;height:27px;line-height:27px;color:#333;"><span style="color:#ff0000">2-0</span>(0-0)</div>
<div class="c" style="left:331px;top:726px;width:36px;height:27px;line-height:27px;color:#333;">12-7</div>
<div class="c" style="left:368px;top:726px;width:99px;height:27px;line-height:27px;color:#000;">奥斯达</div>
<div class="c" style="left:468px;top:726px;width:37px;height:27px;line-height:27px;color:#333;">1.06</div>
<div class="c" style="left:506px;top:726px;width:61px;height:27px;line-height:27px;color:#000;">一/球半</div>
<div class="c" style="left:568px;top:726px;width:38px;height:27px;line-height:27px;color:#333;">0.83</div>
<div class="c" style="left:607px;top:726px;width:56px;height:27px;line-height:27px;color:#333;">1.53</div>
<div class="c" style="left:664px;top:726px;width:58px;height:27px;line-height:27px;color:#333;">4.24</div>
<div class="c" style="left:723px;top:726px;width:58px;height:27px;line-height:27px;color:#333;">5.36</div>
<div class="c" style="left:782px;top:726px;width:35px;height:27px;line-height:27px;color:#ff0000;">勝</div>
<div class="c" style="left:818px;top:726px;width:35px;height:27px;line-height:27px;color:#ff0000;">贏</div>
<div class="c" style="left:854px;top:726px;width:52px;height:27px;line-height:27px;color:#008000;">小</div>
<div class="sel" style="left:485px;top:433px;width:57px;height:18px;line-height:18px"><span class="st"><span style="font-size:13px">Crow*</span></span><span class="ar">&#9660;</span></div>
<div class="sel" style="left:552px;top:433px;width:34px;height:18px;line-height:18px"><span class="st">终</span><span class="ar">&#9660;</span></div>
<div class="sel" style="left:630px;top:433px;width:82px;height:18px;line-height:18px"><span class="st">胜平负均值</span><span class="ar">&#9660;</span></div>
<div class="sel" style="left:722px;top:433px;width:34px;height:18px;line-height:18px"><span class="st">终</span><span class="ar">&#9660;</span></div>
<div class="sel" style="left:820px;top:433px;width:45px;height:18px;line-height:18px"><span class="st">全场</span><span class="ar">&#9660;</span></div>
</body></html>
